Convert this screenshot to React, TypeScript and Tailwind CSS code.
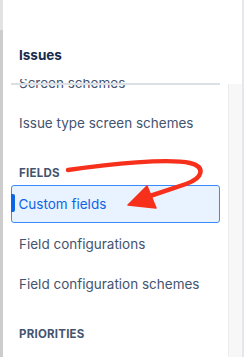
import React from 'react'

type Row = { label: string; kind: 'item' | 'head'; active?: boolean }

const rows: Row[] = [
  { label: 'Screen schemes', kind: 'item' },
  { label: 'Issue type screen schemes', kind: 'item' },
  { label: 'Fields', kind: 'head' },
  { label: 'Custom fields', kind: 'item', active: true },
  { label: 'Field configurations', kind: 'item' },
  { label: 'Field configuration schemes', kind: 'item' },
  { label: 'Priorities', kind: 'head' },
  { label: 'Priority schemes', kind: 'item' },
]

function NavRow({ row }: { row: Row }) {
  if (row.kind === 'head') {
    return (
      <div className="pt-[22px] pb-[3px] pl-4 h-[41px] text-[11.5px] leading-4 font-bold uppercase tracking-[0.02em] text-[#44546f]">
        {row.label}
      </div>
    )
  }
  return (
    <div className="px-2 py-[1px]">
      <div
        className={`relative flex h-[38px] items-center rounded-[3px] pl-2 text-[13.5px] ${
          row.active
            ? 'border-[1.5px] border-[#388bff] bg-[#e9f2ff] pl-[6.5px] text-[#0c66e4]'
            : 'text-[#44546f]'
        }`}
      >
        {row.active && (
          <span className="absolute left-[-1.5px] top-[8px] h-[18px] w-[4px] rounded-r-[2px] bg-[#0c66e4]" />
        )}
        {row.label}
      </div>
    </div>
  )
}

export default function App() {
  return (
    <div className="relative flex h-[357px] w-[246px] overflow-hidden bg-white font-['Inter',sans-serif]">
      <div className="flex w-[3px] flex-col">
        <div className="h-[30px] bg-[#e2e2e2]" />
        <div className="flex-1 bg-[#cdcdcd]" />
      </div>

      <div className="flex flex-1 flex-col">
        <div className="h-[2px] bg-white" />
        <div className="h-[1px] bg-[#dedee8]" />
        <div className="flex flex-1">
          <div className="flex flex-1 flex-col">
            <div className="flex h-[79px] shrink-0 items-center pl-4 pt-[32px]">
              <h2 className="text-[13.5px] font-bold text-[#172b4d]">Issues</h2>
            </div>
            <div className="flex flex-1">
              <div className="relative flex-1 overflow-hidden">
                <div className="mt-[-16px]">
                  {rows.map((r) => (
                    <NavRow key={r.label} row={r} />
                  ))}
                </div>
                <div className="absolute left-2 right-2 top-[4px] h-[2px] bg-[#dcdfe4]" />
              </div>
              <div className="mt-[5px] w-[14px] border-l border-[#ececec] bg-[#f7f7f8]" />
            </div>
          </div>
          <div className="w-[2px] bg-[#e6e6ee]" />
          <div className="w-[2px] bg-white" />
        </div>
      </div>

      <svg className="pointer-events-none absolute inset-0" width="246" height="357" viewBox="0 0 246 357">
        <path
          d="M68 170 C 110 164 168 158 190 163 C 206 167 203 178 186 184 L 150 196"
          fill="none"
          stroke="#f7301c"
          strokeWidth="4.5"
          strokeLinecap="round"
          strokeLinejoin="round"
        />
        <polygon points="128,205 147,186 156,208" fill="#f7301c" stroke="#f7301c" strokeWidth="1.5" strokeLinejoin="round" />
      </svg>
    </div>
  )
}
